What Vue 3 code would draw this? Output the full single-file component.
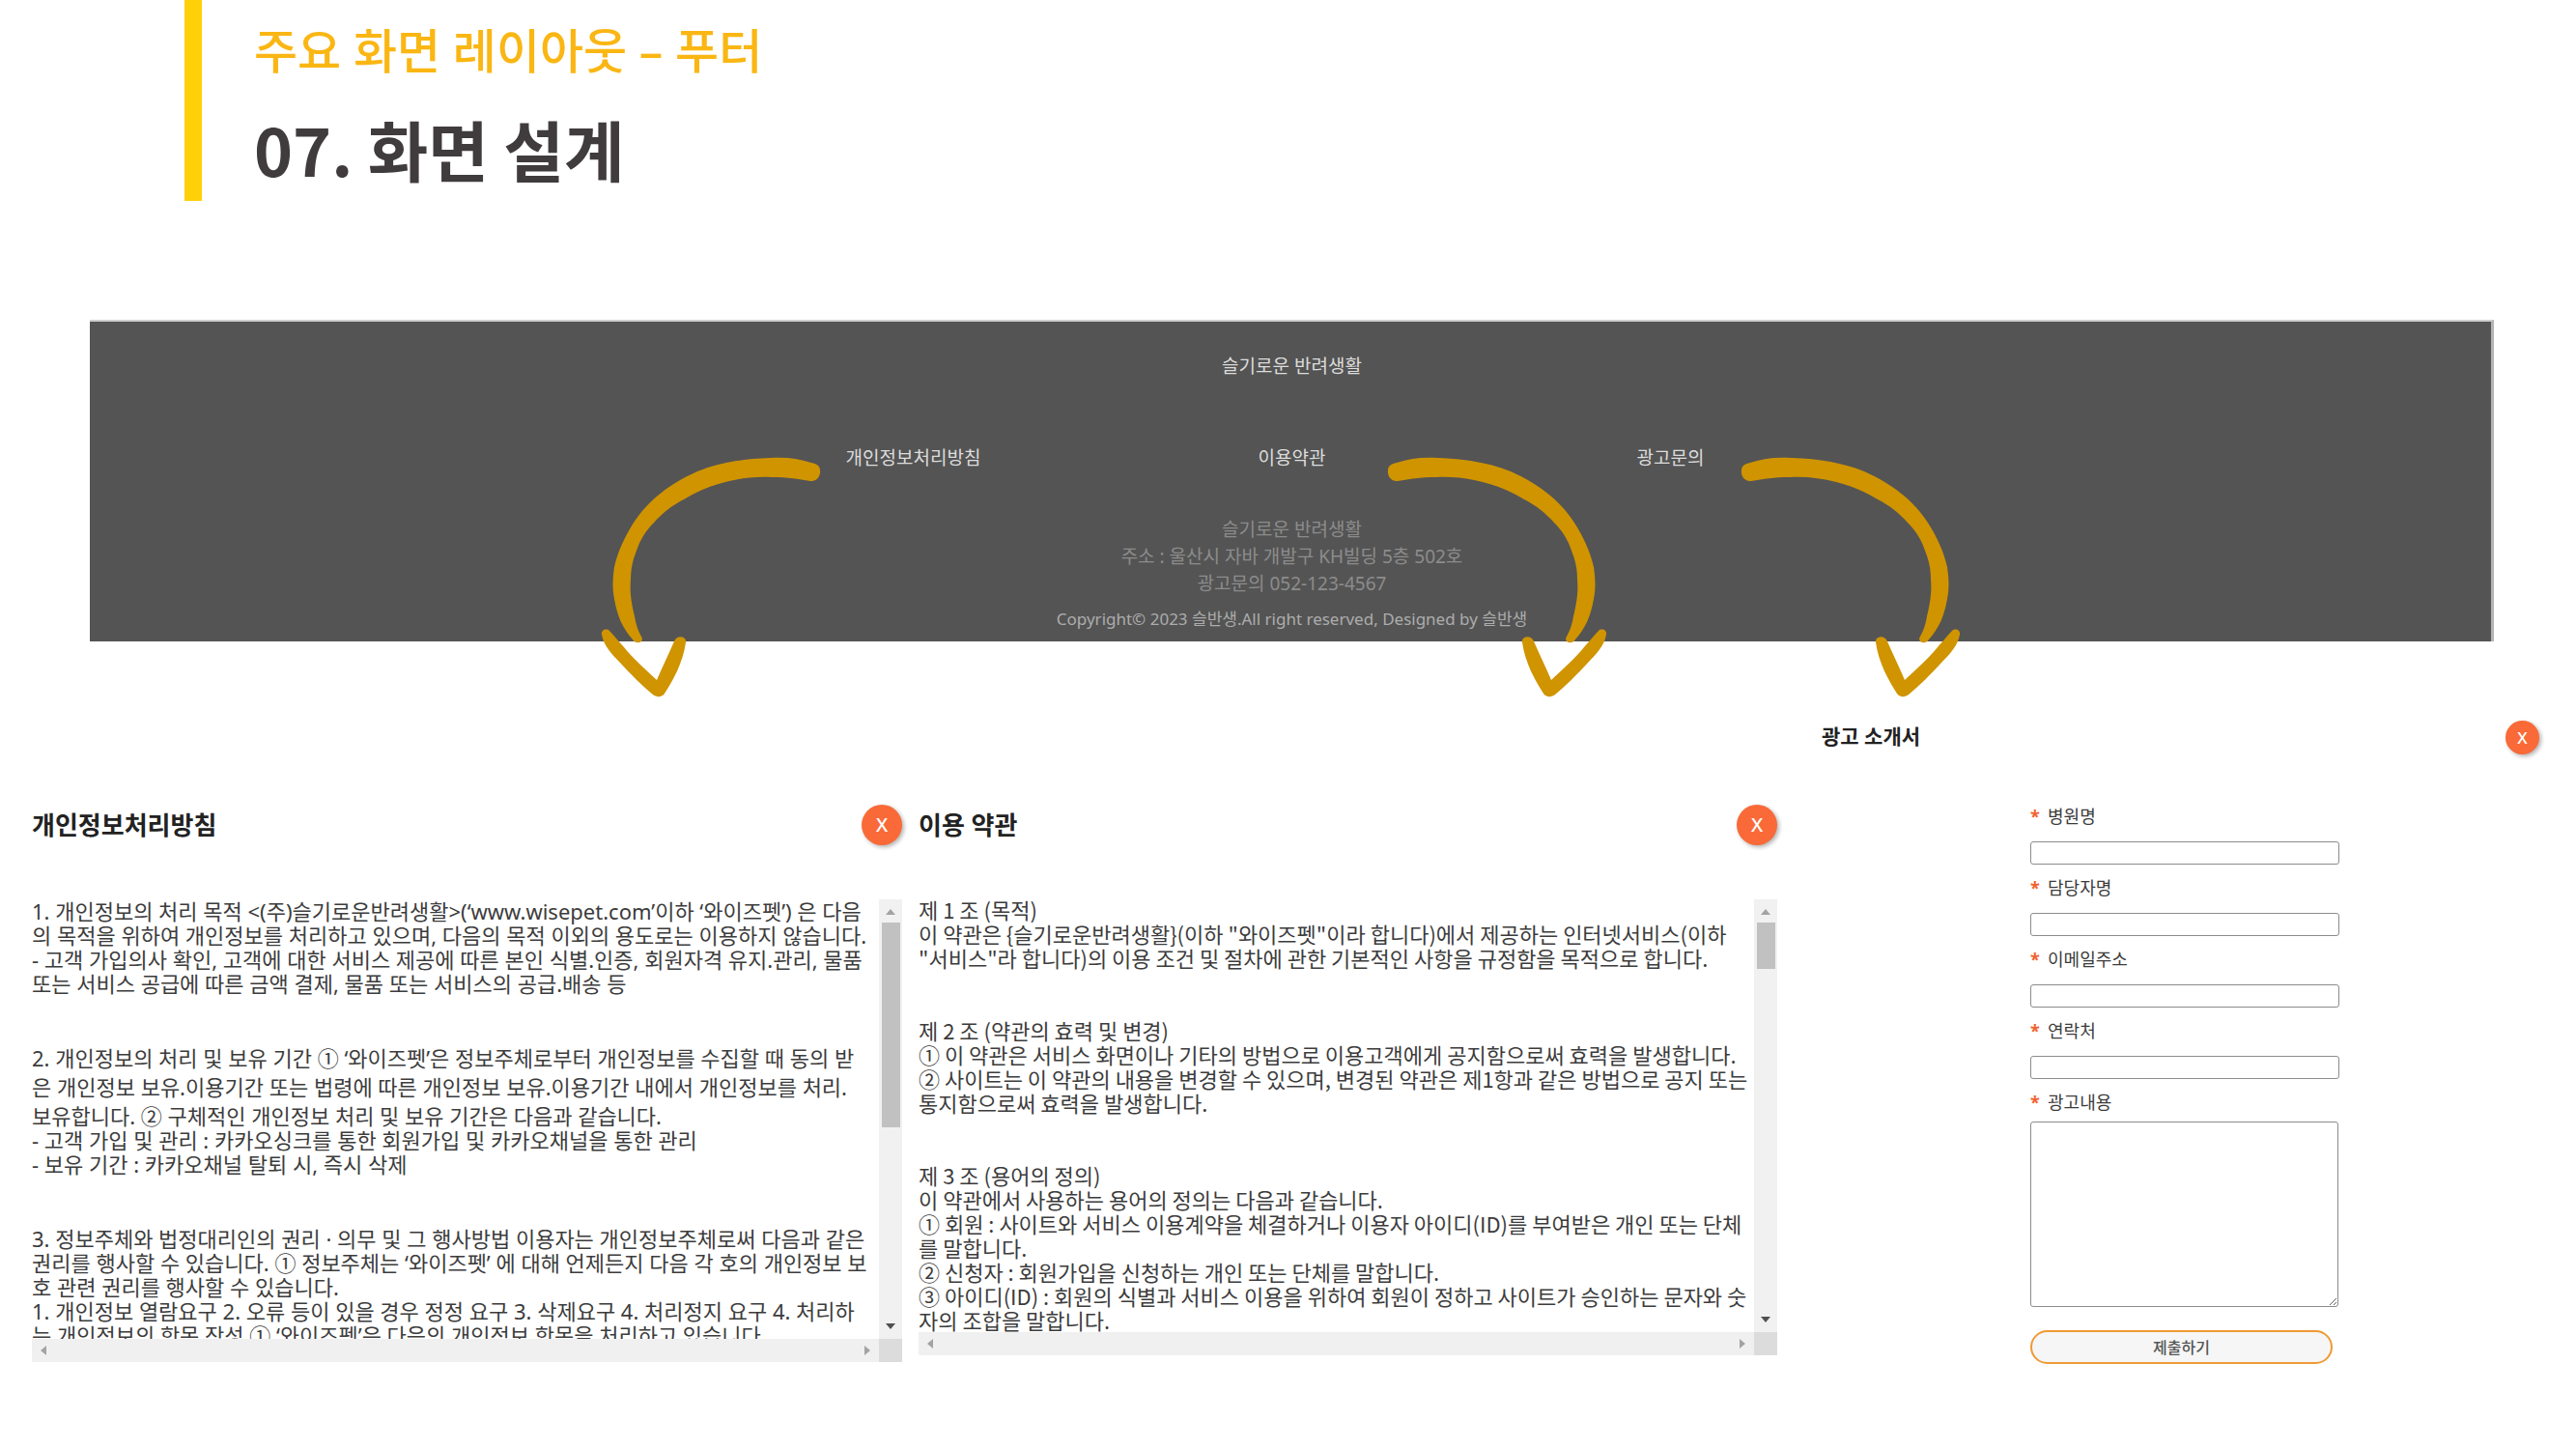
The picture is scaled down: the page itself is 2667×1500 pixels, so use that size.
<script setup>
const links = [
  { text: '개인정보처리방침', href: '#privacy', arrow: 'arrow-left' },
  { text: '이용약관', href: '#terms', arrow: 'arrow-right-far' },
  { text: '광고문의', href: '#ads', arrow: 'arrow-right' },
]

const documents = [
  {
    id: 'privacy',
    title: '개인정보처리방침',
    sections: [
      [
        { text: '1. 개인정보의 처리 목적 <(주)슬기로운반려생활>(‘www.wisepet.com’이하 ‘와이즈펫’) 은 다음' },
        { text: '의 목적을 위하여 개인정보를 처리하고 있으며, 다음의 목적 이외의 용도로는 이용하지 않습니다.' },
        { text: '- 고객 가입의사 확인, 고객에 대한 서비스 제공에 따른 본인 식별.인증, 회원자격 유지.관리, 물품' },
        { text: '또는 서비스 공급에 따른 금액 결제, 물품 또는 서비스의 공급.배송 등' },
      ],
      [
        { text: '2. 개인정보의 처리 및 보유 기간 ① ‘와이즈펫’은 정보주체로부터 개인정보를 수집할 때 동의 받', loose: true },
        { text: '은 개인정보 보유.이용기간 또는 법령에 따른 개인정보 보유.이용기간 내에서 개인정보를 처리.', loose: true },
        { text: '보유합니다. ② 구체적인 개인정보 처리 및 보유 기간은 다음과 같습니다.' },
        { text: '- 고객 가입 및 관리 : 카카오싱크를 통한 회원가입 및 카카오채널을 통한 관리' },
        { text: '- 보유 기간 : 카카오채널 탈퇴 시, 즉시 삭제' },
      ],
      [
        { text: '3. 정보주체와 법정대리인의 권리 · 의무 및 그 행사방법 이용자는 개인정보주체로써 다음과 같은' },
        { text: '권리를 행사할 수 있습니다. ① 정보주체는 ‘와이즈펫’ 에 대해 언제든지 다음 각 호의 개인정보 보' },
        { text: '호 관련 권리를 행사할 수 있습니다.' },
        { text: '1. 개인정보 열람요구 2. 오류 등이 있을 경우 정정 요구 3. 삭제요구 4. 처리정지 요구 4. 처리하' },
        { text: '는 개인정보의 항목 작성 ① ‘와이즈펫’은 다음의 개인정보 항목을 처리하고 있습니다.' },
      ],
    ],
  },
  {
    id: 'terms',
    title: '이용 약관',
    sections: [
      [
        { text: '제 1 조 (목적)' },
        { text: '이 약관은 {슬기로운반려생활}(이하 "와이즈펫"이라 합니다)에서 제공하는 인터넷서비스(이하' },
        { text: '"서비스"라 합니다)의 이용 조건 및 절차에 관한 기본적인 사항을 규정함을 목적으로 합니다.' },
      ],
      [
        { text: '제 2 조 (약관의 효력 및 변경)' },
        { text: '① 이 약관은 서비스 화면이나 기타의 방법으로 이용고객에게 공지함으로써 효력을 발생합니다.' },
        { text: '② 사이트는 이 약관의 내용을 변경할 수 있으며, 변경된 약관은 제1항과 같은 방법으로 공지 또는' },
        { text: '통지함으로써 효력을 발생합니다.' },
      ],
      [
        { text: '제 3 조 (용어의 정의)' },
        { text: '이 약관에서 사용하는 용어의 정의는 다음과 같습니다.' },
        { text: '① 회원 : 사이트와 서비스 이용계약을 체결하거나 이용자 아이디(ID)를 부여받은 개인 또는 단체' },
        { text: '를 말합니다.' },
        { text: '② 신청자 : 회원가입을 신청하는 개인 또는 단체를 말합니다.' },
        { text: '③ 아이디(ID) : 회원의 식별과 서비스 이용을 위하여 회원이 정하고 사이트가 승인하는 문자와 숫' },
        { text: '자의 조합을 말합니다.' },
      ],
    ],
  },
]

const fields = [
  { id: 'hospital', label: '병원명', type: 'text' },
  { id: 'manager', label: '담당자명', type: 'text' },
  { id: 'email', label: '이메일주소', type: 'email' },
  { id: 'phone', label: '연락처', type: 'tel' },
]
</script>

<template>
  <main class="slide">
    <header class="heading">
      <p class="subtitle">주요 화면 레이아웃 – 푸터</p>
      <h1 class="title">07. 화면 설계</h1>
    </header>

    <footer class="site-footer">
      <p class="brand">슬기로운 반려생활</p>
      <nav class="footer-nav">
        <div v-for="link in links" :key="link.href" class="nav-item">
          <a :href="link.href">{{ link.text }}</a>
          <svg class="arrow" :class="link.arrow" viewBox="0 0 232 254" aria-hidden="true">
            <path d="M3 17C3 12 7 10 12 9C26 4 40 3 55 4C84 5 108 9 130 18C148 26 160 34 171 43C183 53 192 64 199 76C208 91 213 104 216 117C218 131 218 140 216 150C213 168 207 181 197 192C194 197 187 196 187 191C190 185 193 180 195 168C199 152 200 141 199 130C199 119 197 110 193 100C189 88 183 79 175 71C166 61 156 53 144 47C131 39 117 33 101 29C86 25 69 23 53 24C36 24 26 26 13 28C7 29 2 23 3 17Z" />
            <path d="M142 195C141 188 152 187 154 194C161 210 167 222 172 234C184 223 197 211 206 200C214 191 218 186 221 183C224 180 230 182 229 187C227 198 219 207 210 216C199 228 187 240 176 249C172 252 167 252 164 248C155 234 145 216 142 195Z" />
          </svg>
        </div>
      </nav>
      <address class="company">
        슬기로운 반려생활<br />
        주소 : 울산시 자바 개발구 KH빌딩 5층 502호<br />
        광고문의 052-123-4567
      </address>
      <p class="copyright">Copyright© 2023 슬반생.All right reserved, Designed by 슬반생</p>
    </footer>

    <div class="panels">
      <section v-for="doc in documents" :id="doc.id" :key="doc.id" class="panel" :class="doc.id">
        <div class="panel-head">
          <h2>{{ doc.title }}</h2>
          <button type="button" class="close" aria-label="닫기">X</button>
        </div>
        <div class="scroll-box">
          <div class="doc-text">
            <div v-for="(section, s) in doc.sections" :key="s" class="doc-section">
              <p v-for="line in section" :key="line.text" :class="{ loose: line.loose }">{{ line.text }}</p>
            </div>
          </div>
          <div class="bar-v" aria-hidden="true">
            <svg viewBox="0 0 12 6"><path d="M1 6L6 0L11 6Z" fill="#a3a3a3" /></svg>
            <span class="thumb"></span>
            <svg class="down" viewBox="0 0 12 6"><path d="M1 0L6 6L11 0Z" fill="#505050" /></svg>
          </div>
          <div class="bar-h" aria-hidden="true">
            <svg viewBox="0 0 6 12"><path d="M6 1L0 6L6 11Z" fill="#a3a3a3" /></svg>
            <svg viewBox="0 0 6 12"><path d="M0 1L6 6L0 11Z" fill="#a3a3a3" /></svg>
          </div>
          <div class="corner"></div>
        </div>
      </section>

      <section id="ads" class="panel ads">
        <div class="panel-head">
          <h2>광고 소개서</h2>
          <button type="button" class="close" aria-label="닫기">X</button>
        </div>
        <form class="ad-form" @submit.prevent>
          <div v-for="field in fields" :key="field.id" class="field">
            <label :for="field.id"><span class="mark">*</span>{{ field.label }}</label>
            <input :id="field.id" :type="field.type" />
          </div>
          <div class="field message">
            <label for="message"><span class="mark">*</span>광고내용</label>
            <textarea id="message"></textarea>
          </div>
          <button type="submit" class="submit">제출하기</button>
        </form>
      </section>
    </div>
  </main>
</template>

<style>
body {
  margin: 0;
  background: #fff;
}
</style>

<style scoped>
.slide {
  font-family: "Noto Sans", "Noto Sans CJK KR", sans-serif;
  color: #3c3c3c;
}
.slide * {
  box-sizing: border-box;
}
h1, h2, p {
  margin: 0;
}
button, input, textarea {
  font-family: inherit;
}

.heading {
  margin-left: 191px;
  height: 208px;
  padding: 16px 0 0 54px;
  border-left: 18px solid #ffd008;
}
.subtitle {
  font-size: 49px;
  line-height: 72px;
  font-weight: 500;
  color: #fab613;
}
.title {
  margin-top: 16px;
  font-family: "Noto Sans CJK KR", "Noto Sans", sans-serif;
  font-size: 68px;
  line-height: 100px;
  font-weight: 700;
  color: #403c3d;
}

.site-footer {
  margin: 123px 85px 0 93px;
  padding: 32px 0 0 3px;
  height: 333px;
  background: #545454;
  border-top: 2px solid #cfcfcf;
  border-right: 3px solid #b4b4b4;
  text-align: center;
  font-size: 19px;
  line-height: 28px;
  color: #dcdcdc;
}
.footer-nav {
  display: grid;
  grid-template-columns: repeat(3, 392px);
  justify-content: center;
  margin-top: 67px;
}
.nav-item {
  position: relative;
  justify-self: center;
}
.nav-item a {
  color: inherit;
  text-decoration: none;
}
.arrow {
  position: absolute;
  top: 10px;
  width: 232px;
  height: 254px;
  fill: #cf9400;
}
.arrow-left {
  right: calc(100% + 24px);
  transform: scaleX(-1);
}
.arrow-right {
  left: calc(100% + 36px);
}
.arrow-right-far {
  left: calc(100% + 62px);
}
.company {
  margin-top: 46px;
  font-style: normal;
  color: #8c8c8c;
}
.copyright {
  margin-top: 9px;
  font-size: 17px;
  color: #acacac;
}

.panels {
  display: grid;
  grid-template-columns: 901fr 889fr 774fr;
  column-gap: 17px;
  align-items: start;
  margin: 82px 36px 0 33px;
}
.privacy, .terms {
  padding-top: 87px;
}
.ads {
  padding-left: 29px;
}
.panel-head {
  display: flex;
  justify-content: space-between;
  align-items: center;
}
.panel-head h2 {
  font-size: 26px;
  line-height: 38px;
  font-weight: 700;
  color: #222;
}
.close {
  width: 42px;
  height: 42px;
  padding: 0;
  border: 0;
  border-radius: 50%;
  background: #f96a38;
  box-shadow: 2px 2px 4px rgba(0, 0, 0, 0.3);
  color: #fff;
  font-size: 20px;
  line-height: 40px;
  font-weight: 500;
}
.ads .panel-head {
  align-items: flex-start;
  padding-right: 2px;
}
.ads h2 {
  font-size: 21px;
  line-height: 32px;
}
.ads .close {
  width: 35px;
  height: 35px;
  font-size: 17px;
  line-height: 33px;
}

.scroll-box {
  display: grid;
  grid-template-columns: minmax(0, 1fr) 24px;
  grid-template-rows: 455px 24px;
  margin-top: 56px;
}
.terms .scroll-box {
  grid-template-rows: 448px 24px;
}
.doc-text {
  margin-top: -6px;
  padding-top: 6px;
  overflow: hidden;
  font-size: 22px;
  line-height: 25px;
  white-space: nowrap;
}
.terms .doc-text {
  padding-top: 4px;
  font-family: "Noto Sans CJK KR", "Noto Sans", sans-serif;
}
.privacy .doc-section + .doc-section {
  margin-top: 52px;
}
.terms .doc-section + .doc-section {
  margin-top: 50px;
}
.loose {
  margin-bottom: 5px;
}
.bar-v {
  display: flex;
  flex-direction: column;
  align-items: center;
  padding: 10px 0;
  background: #f1f1f1;
}
.bar-v svg {
  width: 12px;
  height: 6px;
}
.thumb {
  width: 19px;
  height: 212px;
  margin-top: 8px;
  background: #c1c1c1;
}
.terms .thumb {
  height: 48px;
}
.down {
  margin-top: auto;
}
.bar-h {
  display: flex;
  justify-content: space-between;
  align-items: center;
  padding: 0 9px;
  background: #f0f0f0;
}
.bar-h svg {
  width: 6px;
  height: 12px;
}
.corner {
  background: #dcdcdc;
}

.ad-form {
  width: 320px;
  margin: 52px 0 0 29%;
}
.field {
  display: flex;
  flex-direction: column;
  gap: 14px;
  margin-bottom: 12px;
}
.field label {
  display: flex;
  gap: 10px;
  font-size: 18px;
  line-height: 24px;
}
.mark {
  width: 8px;
  font-weight: 700;
  color: #f4622f;
}
.field input {
  height: 24px;
  padding: 0 4px;
  border: 1px solid #8c8c8c;
  border-radius: 3px;
  background: #fff;
}
.message {
  gap: 8px;
  margin-bottom: 24px;
}
.field textarea {
  display: block;
  width: 319px;
  height: 192px;
  border: 1px solid #8c8c8c;
  border-radius: 3px;
  background: #fff;
}
.submit {
  display: block;
  width: 313px;
  height: 35px;
  padding: 0;
  border: 2px solid #ef9a35;
  border-radius: 18px;
  background: #f6f6f6;
  color: #555;
  font-size: 16px;
  line-height: 30px;
  font-weight: 500;
}
</style>
